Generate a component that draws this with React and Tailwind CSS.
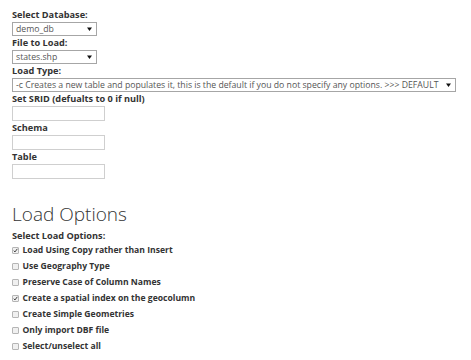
import React from "react";

const loadOptions = [
  { id: "copy", label: "Load Using Copy rather than Insert", checked: true },
  { id: "geography", label: "Use Geography Type", checked: false },
  { id: "preserve", label: "Preserve Case of Column Names", checked: false },
  { id: "index", label: "Create a spatial index on the geocolumn", checked: true },
  { id: "simple", label: "Create Simple Geometries", checked: false },
  { id: "dbf", label: "Only import DBF file", checked: false },
  { id: "all", label: "Select/unselect all", checked: false }
];

function Select({ value, className }) {
  return (
    <div
      className={`h-[14px] flex items-center justify-between border border-[#a6a6a6] bg-white pl-[3px] pr-[4px] text-[8.7px] text-[#555] leading-none ${className}`}
    >
      <span className="whitespace-nowrap">{value}</span>
      <svg width="5" height="4" viewBox="0 0 5 4" className="shrink-0">
        <path d="M0 0.5 L5 0.5 L2.5 4 Z" fill="#111" />
      </svg>
    </div>
  );
}

function Label({ children }) {
  return <div className="h-[14px] leading-[14px] text-[9.2px] font-bold text-[#333]">{children}</div>;
}

function TextInput() {
  return <div className="h-[15px] w-[93px] border border-[#cfcfcf] bg-white" />;
}

function Checkbox({ checked }) {
  return (
    <span className="w-[7px] h-[7px] border border-[#b5b5b5] rounded-[1px] bg-[#f0f0f0] flex items-center justify-center shrink-0">
      {checked && (
        <svg width="7" height="7" viewBox="0 0 7 7">
          <path d="M1 3.8 L2.8 5.5 L6 1.2" stroke="#333" strokeWidth="1.3" fill="none" />
        </svg>
      )}
    </span>
  );
}

export default function App() {
  return (
    <div className="bg-white min-h-[360px] pl-[12px] pt-[8px] text-[#333]" style={{ fontFamily: '"Open Sans", sans-serif' }}>
      <Label>Select Database:</Label>
      <Select value="demo_db" className="w-[85px]" />
      <Label>File to Load:</Label>
      <Select value="states.shp" className="w-[85px]" />
      <Label>Load Type:</Label>
      <Select
        value="-c Creates a new table and populates it, this is the default if you do not specify any options. >>> DEFAULT"
        className="w-[444px]"
      />
      <Label>Set SRID (defualts to 0 if null)</Label>
      <TextInput />
      <Label>Schema</Label>
      <TextInput />
      <Label>Table</Label>
      <TextInput />

      <h1 className="mt-[22px] text-[19px] leading-[26px] font-light text-[#333]">Load Options</h1>
      <div className="mt-[3px] h-[12px] leading-[12px] text-[9.2px] font-bold">Select Load Options:</div>
      <div className="flex flex-col">
        {loadOptions.map((opt) => (
          <label key={opt.id} className="h-[16px] flex items-center gap-[3.5px] text-[8.6px] font-bold text-[#333]">
            <Checkbox checked={opt.checked} />
            <span>{opt.label}</span>
          </label>
        ))}
      </div>
    </div>
  );
}
